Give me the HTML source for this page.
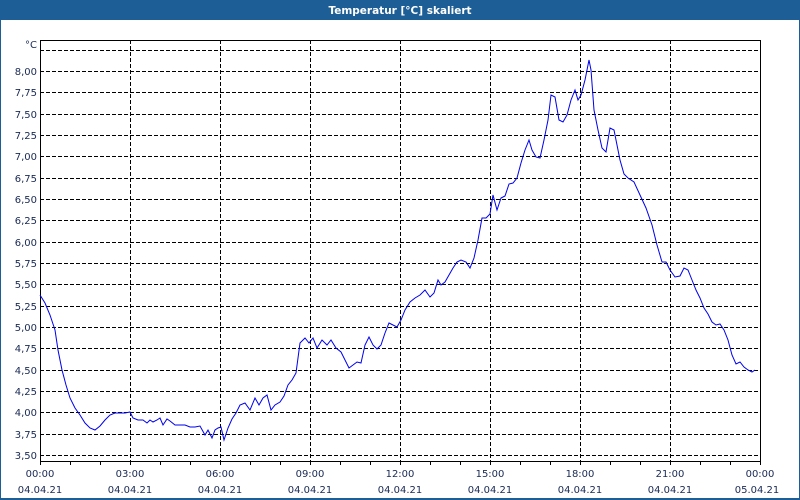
<!DOCTYPE html>
<html><head><meta charset="utf-8"><style>
html,body{margin:0;padding:0;width:800px;height:500px;overflow:hidden;background:#fff}
svg{display:block}
text{font-family:"DejaVu Sans","Liberation Sans",sans-serif;font-size:10px;fill:#1a2a55}
</style></head><body>
<svg width="800" height="500" xmlns="http://www.w3.org/2000/svg">
<rect x="0" y="0" width="800" height="500" fill="#1d5e96"/>
<rect x="1" y="20" width="798" height="478" fill="#fff"/>
<text x="400" y="14" text-anchor="middle" style="fill:#fff;font-weight:bold;font-size:10.5px">Temperatur [°C] skaliert</text>
<g stroke="#000" stroke-width="1" stroke-dasharray="4,2" shape-rendering="crispEdges">
<line x1="40" x2="760" y1="50.5" y2="50.5"/>
<line x1="40" x2="760" y1="71.5" y2="71.5"/>
<line x1="40" x2="760" y1="92.5" y2="92.5"/>
<line x1="40" x2="760" y1="114.5" y2="114.5"/>
<line x1="40" x2="760" y1="135.5" y2="135.5"/>
<line x1="40" x2="760" y1="156.5" y2="156.5"/>
<line x1="40" x2="760" y1="178.5" y2="178.5"/>
<line x1="40" x2="760" y1="199.5" y2="199.5"/>
<line x1="40" x2="760" y1="220.5" y2="220.5"/>
<line x1="40" x2="760" y1="242.5" y2="242.5"/>
<line x1="40" x2="760" y1="263.5" y2="263.5"/>
<line x1="40" x2="760" y1="284.5" y2="284.5"/>
<line x1="40" x2="760" y1="306.5" y2="306.5"/>
<line x1="40" x2="760" y1="327.5" y2="327.5"/>
<line x1="40" x2="760" y1="348.5" y2="348.5"/>
<line x1="40" x2="760" y1="370.5" y2="370.5"/>
<line x1="40" x2="760" y1="391.5" y2="391.5"/>
<line x1="40" x2="760" y1="412.5" y2="412.5"/>
<line x1="40" x2="760" y1="434.5" y2="434.5"/>
<line x1="40" x2="760" y1="455.5" y2="455.5"/>
<line x1="130.5" x2="130.5" y1="40" y2="461"/>
<line x1="220.5" x2="220.5" y1="40" y2="461"/>
<line x1="310.5" x2="310.5" y1="40" y2="461"/>
<line x1="400.5" x2="400.5" y1="40" y2="461"/>
<line x1="490.5" x2="490.5" y1="40" y2="461"/>
<line x1="580.5" x2="580.5" y1="40" y2="461"/>
<line x1="670.5" x2="670.5" y1="40" y2="461"/>
</g>
<g stroke="#000" stroke-width="1" fill="none" shape-rendering="crispEdges">
<path d="M40.5 461.5 V40.5 H760.5 V461.5 H40.5"/>
<path d="M40.5 461v4M70.5 461v4M100.5 461v4M130.5 461v4M160.5 461v4M190.5 461v4M220.5 461v4M250.5 461v4M280.5 461v4M310.5 461v4M340.5 461v4M370.5 461v4M400.5 461v4M430.5 461v4M460.5 461v4M490.5 461v4M520.5 461v4M550.5 461v4M580.5 461v4M610.5 461v4M640.5 461v4M670.5 461v4M700.5 461v4M730.5 461v4M760.5 461v4"/>
</g>
<polyline fill="none" stroke="#0000ee" stroke-width="1" points="40,295 45,303 50,315 55,330 58,350 62,370 66,385 70,398 75,408 80,415 85,423 90,428 95,430 100,426 105,420 110,415 115,413 120,413 125,413 130,412 133,418 138,420 143,420 147,423 150,420 153,422 157,420 160,418 163,425 167,419 170,421 175,425 180,425 185,425 190,427 195,427 200,426 205,435 208,430 212,438 215,430 218,428 221,427 224,440 228,428 232,419 236,413 240,405 245,403 250,410 255,398 259,405 263,398 267,395 271,410 275,405 280,402 284,396 288,385 292,380 296,373 300,343 305,338 309,343 313,338 317,348 322,340 327,345 331,340 336,348 341,352 345,360 349,368 353,365 357,362 361,363 365,345 369,337 373,345 377,349 381,345 385,333 389,323 393,325 397,327 401,320 405,310 410,302 415,298 420,295 425,290 430,297 434,293 438,280 441,285 445,282 449,275 453,268 457,262 461,260 466,262 470,268 474,258 478,240 482,218 486,218 490,214 493,195 497,210 501,198 505,196 509,184 513,183 517,178 521,163 525,150 529,140 532,150 536,157 540,158 544,140 548,120 551,95 555,97 559,120 563,122 567,115 571,100 575,90 578,100 581,95 585,80 589,60 591,70 594,110 598,130 602,148 606,152 608,140 610,128 614,130 616,140 620,160 624,174 628,178 634,182 640,195 646,208 652,225 657,245 662,262 666,262 670,270 675,277 680,276 684,268 688,270 692,280 696,290 700,298 704,308 708,314 712,322 716,325 720,324 724,330 728,340 732,355 736,364 740,362 744,367 748,370 752,372 755,370"/>
<g text-anchor="end">
<text x="37" y="48">°C</text>
<text x="37" y="75">8,00</text>
<text x="37" y="96">7,75</text>
<text x="37" y="118">7,50</text>
<text x="37" y="139">7,25</text>
<text x="37" y="160">7,00</text>
<text x="37" y="182">6,75</text>
<text x="37" y="203">6,50</text>
<text x="37" y="224">6,25</text>
<text x="37" y="246">6,00</text>
<text x="37" y="267">5,75</text>
<text x="37" y="288">5,50</text>
<text x="37" y="310">5,25</text>
<text x="37" y="331">5,00</text>
<text x="37" y="352">4,75</text>
<text x="37" y="374">4,50</text>
<text x="37" y="395">4,25</text>
<text x="37" y="416">4,00</text>
<text x="37" y="438">3,75</text>
<text x="37" y="459">3,50</text>
</g>
<g text-anchor="middle">
<text x="40" y="477">00:00</text><text x="40" y="493">04.04.21</text>
<text x="130" y="477">03:00</text><text x="130" y="493">04.04.21</text>
<text x="220" y="477">06:00</text><text x="220" y="493">04.04.21</text>
<text x="310" y="477">09:00</text><text x="310" y="493">04.04.21</text>
<text x="400" y="477">12:00</text><text x="400" y="493">04.04.21</text>
<text x="490" y="477">15:00</text><text x="490" y="493">04.04.21</text>
<text x="580" y="477">18:00</text><text x="580" y="493">04.04.21</text>
<text x="670" y="477">21:00</text><text x="670" y="493">04.04.21</text>
<text x="760" y="477">00:00</text><text x="757" y="493">05.04.21</text>
</g>
</svg>
</body></html>
